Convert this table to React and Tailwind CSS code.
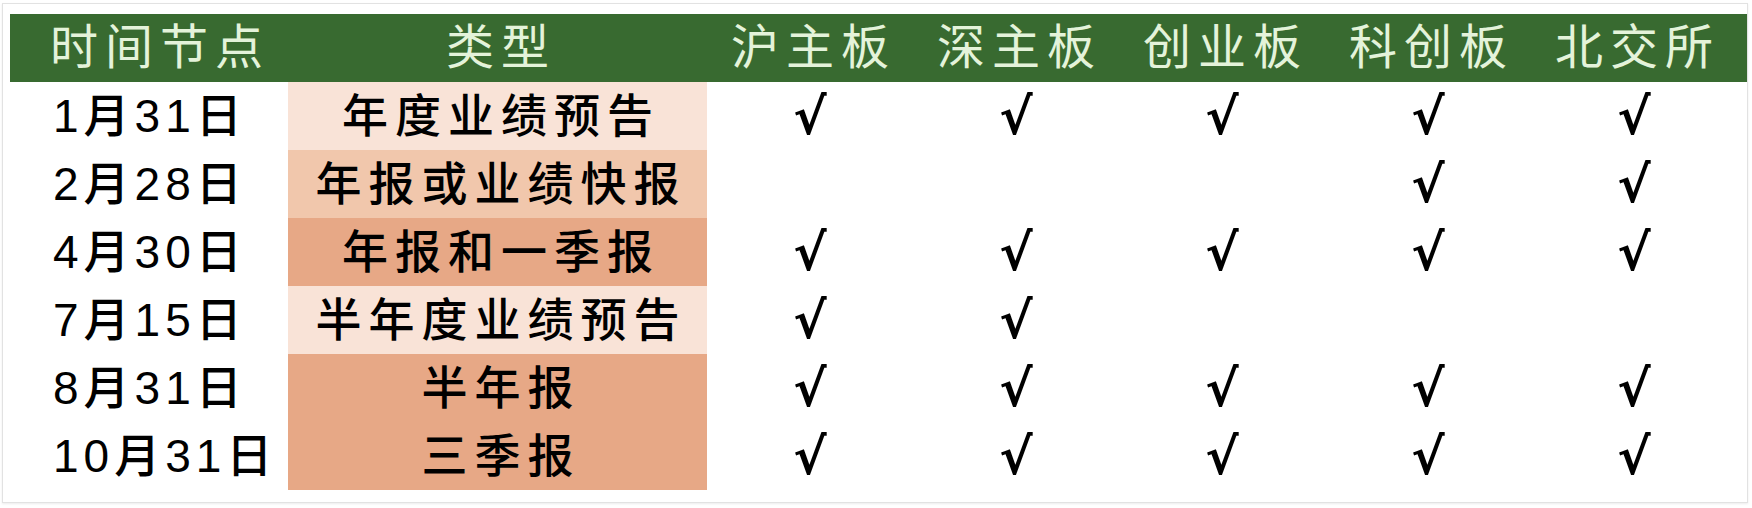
import React from "react";

const headers = ["时间节点", "类型", "沪主板", "深主板", "创业板", "科创板", "北交所"];

const rows = [
    { date: "1月31日", type: "年度业绩预告", bg: "bg-[#f9e3d7]", marks: [1, 1, 1, 1, 1] },
    { date: "2月28日", type: "年报或业绩快报", bg: "bg-[#f1c7ac]", marks: [0, 0, 0, 1, 1] },
    { date: "4月30日", type: "年报和一季报", bg: "bg-[#e7a886]", marks: [1, 1, 1, 1, 1] },
    { date: "7月15日", type: "半年度业绩预告", bg: "bg-[#f9e3d7]", marks: [1, 1, 0, 0, 0] },
    { date: "8月31日", type: "半年报", bg: "bg-[#e7a886]", marks: [1, 1, 1, 1, 1] },
    { date: "10月31日", type: "三季报", bg: "bg-[#e7a886]", marks: [1, 1, 1, 1, 1] },
];

const cols = "grid grid-cols-[278px_419px_206px_206px_206px_206px_206px]";

export default function App() {
    return (
        <div className="w-[1752px] h-[508px] bg-white pt-[3px] pl-[2px]">
            <div className="w-[1746px] h-[500px] border border-[#e2e2e2] shadow-[0_1px_2px_rgba(0,0,0,0.08)] pl-[7px] pt-[10px] font-['Liberation_Sans','Noto_Sans_CJK_SC',sans-serif]">
                <div className={`${cols} h-[68px] bg-[#386a30] text-[#e4f3da] text-[48px] tracking-[7px] font-normal items-center`}>
                    {headers.map((h, i) => (
                        <div key={h} className={i === 0 ? "pl-[40px] leading-none whitespace-nowrap" : "text-center pl-[7px] leading-none whitespace-nowrap"}>
                            {h}
                        </div>
                    ))}
                </div>
                {rows.map((r) => (
                    <div key={r.date} className={`${cols} h-[68px] items-stretch text-black`}>
                        <div className="flex items-center pl-[43px] text-[46px] tracking-[5px] font-medium leading-none whitespace-nowrap">
                            {r.date}
                        </div>
                        <div className={`${r.bg} flex items-center justify-center pl-[7px] text-[46px] tracking-[7px] font-medium leading-none whitespace-nowrap`}>
                            {r.type}
                        </div>
                        {r.marks.map((m, i) => (
                            <div key={i} className="flex items-center justify-center pt-[2px] text-[50px] font-bold leading-none font-['DejaVu_Sans',sans-serif]">
                                {m ? "√" : ""}
                            </div>
                        ))}
                    </div>
                ))}
            </div>
        </div>
    );
}
